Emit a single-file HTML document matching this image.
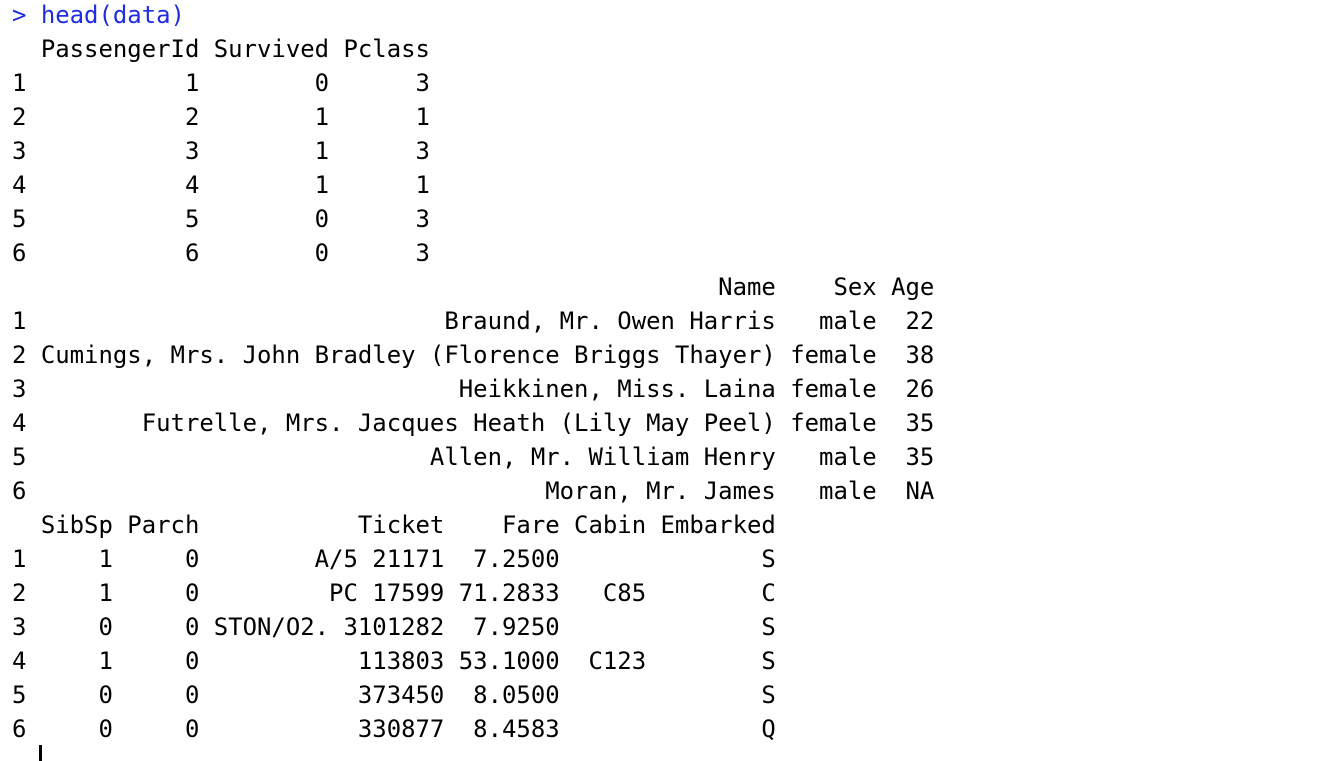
<html><head><style>
body{margin:0;background:#fff;width:1336px;height:760px;overflow:hidden}
pre{margin:0;position:absolute;left:12px;top:-2px;font:23.95px/34px "DejaVu Sans Mono",monospace;color:#000}
.b{color:#1f2ce0}
.c{position:absolute;left:39px;top:745px;width:3px;height:16px;background:#000}
</style></head><body><pre><span class="b">&gt; head(data)</span>
  PassengerId Survived Pclass
1           1        0      3
2           2        1      1
3           3        1      3
4           4        1      1
5           5        0      3
6           6        0      3
                                                 Name    Sex Age
1                             Braund, Mr. Owen Harris   male  22
2 Cumings, Mrs. John Bradley (Florence Briggs Thayer) female  38
3                              Heikkinen, Miss. Laina female  26
4        Futrelle, Mrs. Jacques Heath (Lily May Peel) female  35
5                            Allen, Mr. William Henry   male  35
6                                    Moran, Mr. James   male  NA
  SibSp Parch           Ticket    Fare Cabin Embarked
1     1     0        A/5 21171  7.2500              S
2     1     0         PC 17599 71.2833   C85        C
3     0     0 STON/O2. 3101282  7.9250              S
4     1     0           113803 53.1000  C123        S
5     0     0           373450  8.0500              S
6     0     0           330877  8.4583              Q</pre><div class="c"></div></body></html>
